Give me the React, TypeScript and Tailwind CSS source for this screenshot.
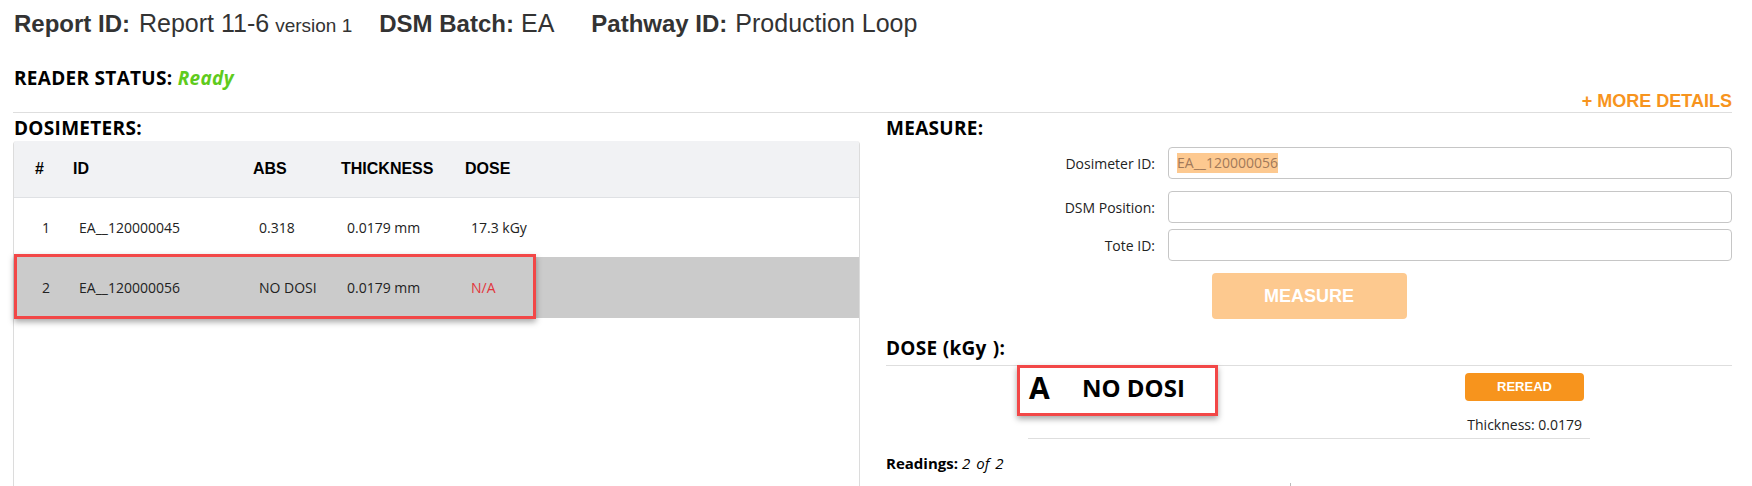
import React from 'react';

const rows = [
  { n: '1', id: 'EA__120000045', abs: '0.318', thick: '0.0179 mm', dose: '17.3 kGy', sel: false },
  { n: '2', id: 'EA__120000056', abs: 'NO DOSI', thick: '0.0179 mm', dose: 'N/A', sel: true },
];

const heading = 'text-[19px] leading-[24px] tracking-[0.3px] font-bold text-black';

const FormRow = ({ label, value, className }: { label: string; value?: string; className?: string }) => (
  <div className={'flex items-center ' + (className ?? '')}>
    <label className="w-[270px] text-right text-[14px] pr-[1px]">{label}</label>
    <div className="ml-[12px] flex-1 h-[32px] border border-[#c6c6c6] rounded-[4px] flex items-center pl-[8px]">
      {value && <span className="bg-[#fdc990] text-[#a1795a] text-[14px] leading-[20px]">{value}</span>}
    </div>
  </div>
);

export default function App() {
  return (
    <div className="relative w-[1752px] h-[486px] overflow-hidden bg-white pl-[13px] pr-[20px] font-['Open_Sans',sans-serif] text-[#222]">
      {/* top line */}
      <div className="pt-[9px] pl-[1px] flex items-baseline font-['Liberation_Sans',Arial,sans-serif] text-[24px] leading-[28px] text-[#333]">
        <span className="font-bold">Report ID:</span>
        <span className="ml-[9px] text-[25px]">Report 11-6</span>
        <span className="ml-[6px] text-[19px]">version 1</span>
        <span className="ml-[27px] font-bold">DSM Batch:</span>
        <span className="ml-[7px] text-[25px]">EA</span>
        <span className="ml-[37px] font-bold">Pathway ID:</span>
        <span className="ml-[8px] text-[25px]">Production Loop</span>
      </div>

      <div className={'mt-[26px] pl-[1px] ' + heading}>
        READER STATUS: <span className="italic text-[#5fcb1d]">Ready</span>
      </div>

      <div className="mt-[2px] pb-[2px] border-b border-[#dedede] flex justify-end font-['Liberation_Sans',Arial,sans-serif] text-[18px] leading-[18px] font-bold text-[#f7941d]">
        + MORE DETAILS
      </div>

      <div className="flex gap-[26px]">
        {/* dosimeters */}
        <section className="w-[847px]">
          <h2 className={'mt-[3px] pl-[1px] ' + heading}>DOSIMETERS:</h2>
          <div className="mt-[1px] h-[360px] border-x border-[#dcdcdc] rounded-t-[4px] overflow-hidden">
            <div className="h-[57px] bg-[#f1f2f4] border-b border-[#dfe1e4] flex items-center pl-[21px] font-['Liberation_Sans',Arial,sans-serif] text-[16px] font-bold text-black">
              <span className="w-[38px]">#</span>
              <span className="w-[180px]">ID</span>
              <span className="w-[88px]">ABS</span>
              <span className="w-[124px]">THICKNESS</span>
              <span>DOSE</span>
            </div>
            {rows.map((r) => (
              <div
                key={r.n}
                className={'flex items-center pl-[28px] text-[14px] ' + (r.sel ? 'h-[61px] bg-[#cbcbcb]' : 'h-[59px]')}
              >
                <span className="w-[37px]">{r.n}</span>
                <span className="w-[180px]">{r.id}</span>
                <span className="w-[88px]">{r.abs}</span>
                <span className="w-[124px]">{r.thick}</span>
                <span className={r.sel ? 'text-[#e2363c]' : ''}>{r.dose}</span>
              </div>
            ))}
          </div>
        </section>

        {/* measure */}
        <section className="flex-1">
          <h2 className={'mt-[3px] ' + heading}>MEASURE:</h2>
          <FormRow className="mt-[7px]" label="Dosimeter ID:" value="EA__120000056" />
          <FormRow className="mt-[12px]" label="DSM Position:" />
          <FormRow className="mt-[6px]" label="Tote ID:" />
          <div className="mt-[12px] flex justify-center">
            <button className="w-[195px] h-[46px] rounded-[4px] bg-[#fdc98f] text-white font-['Liberation_Sans',Arial,sans-serif] text-[18px] font-bold">
              MEASURE
            </button>
          </div>

          <h2 className={'mt-[17px] pb-[5px] border-b border-[#dedede] ' + heading}>
            DOSE (kGy<span className="ml-[6px]">):</span>
          </h2>
          <div className="mx-auto w-[562px] h-[73px] border-b border-[#dedede] flex justify-between">
            <div className="flex items-start pl-[1px]">
              <span className="w-[53px] pt-[4px] text-[30px] leading-[36px] font-bold text-black">A</span>
              <span className="pt-[7px] text-[24px] leading-[30px] font-bold text-black">NO DOSI</span>
            </div>
            <div className="flex flex-col items-end pr-[6px] pt-[7px]">
              <button className="w-[119px] h-[28px] rounded-[4px] bg-[#f7941d] text-white font-['Liberation_Sans',Arial,sans-serif] text-[13px] font-bold">
                REREAD
              </button>
              <span className="mt-[14px] pr-[2px] text-[14px] leading-[20px]">Thickness: 0.0179</span>
            </div>
          </div>
          <div className="mt-[14px] text-[15px] leading-[20px] text-black">
            <span className="font-bold">Readings:</span>
            <span className="italic ml-[4px]">2</span>
            <span className="italic ml-[6px]">of</span>
            <span className="italic ml-[6px]">2</span>
          </div>
          <div className="mt-[10px] ml-[404px] w-px h-[6px] bg-[#bbb]" />
        </section>
      </div>

      {/* annotation boxes */}
      <div className="absolute left-[14px] top-[254px] w-[522px] h-[65px] border-[3px] border-[#f24747] shadow-[0_3px_6px_rgba(0,0,0,0.35)]" />
      <div className="absolute left-[1017px] top-[365px] w-[201px] h-[51px] border-[3px] border-[#f24747] shadow-[0_3px_6px_rgba(0,0,0,0.35)]" />
    </div>
  );
}
